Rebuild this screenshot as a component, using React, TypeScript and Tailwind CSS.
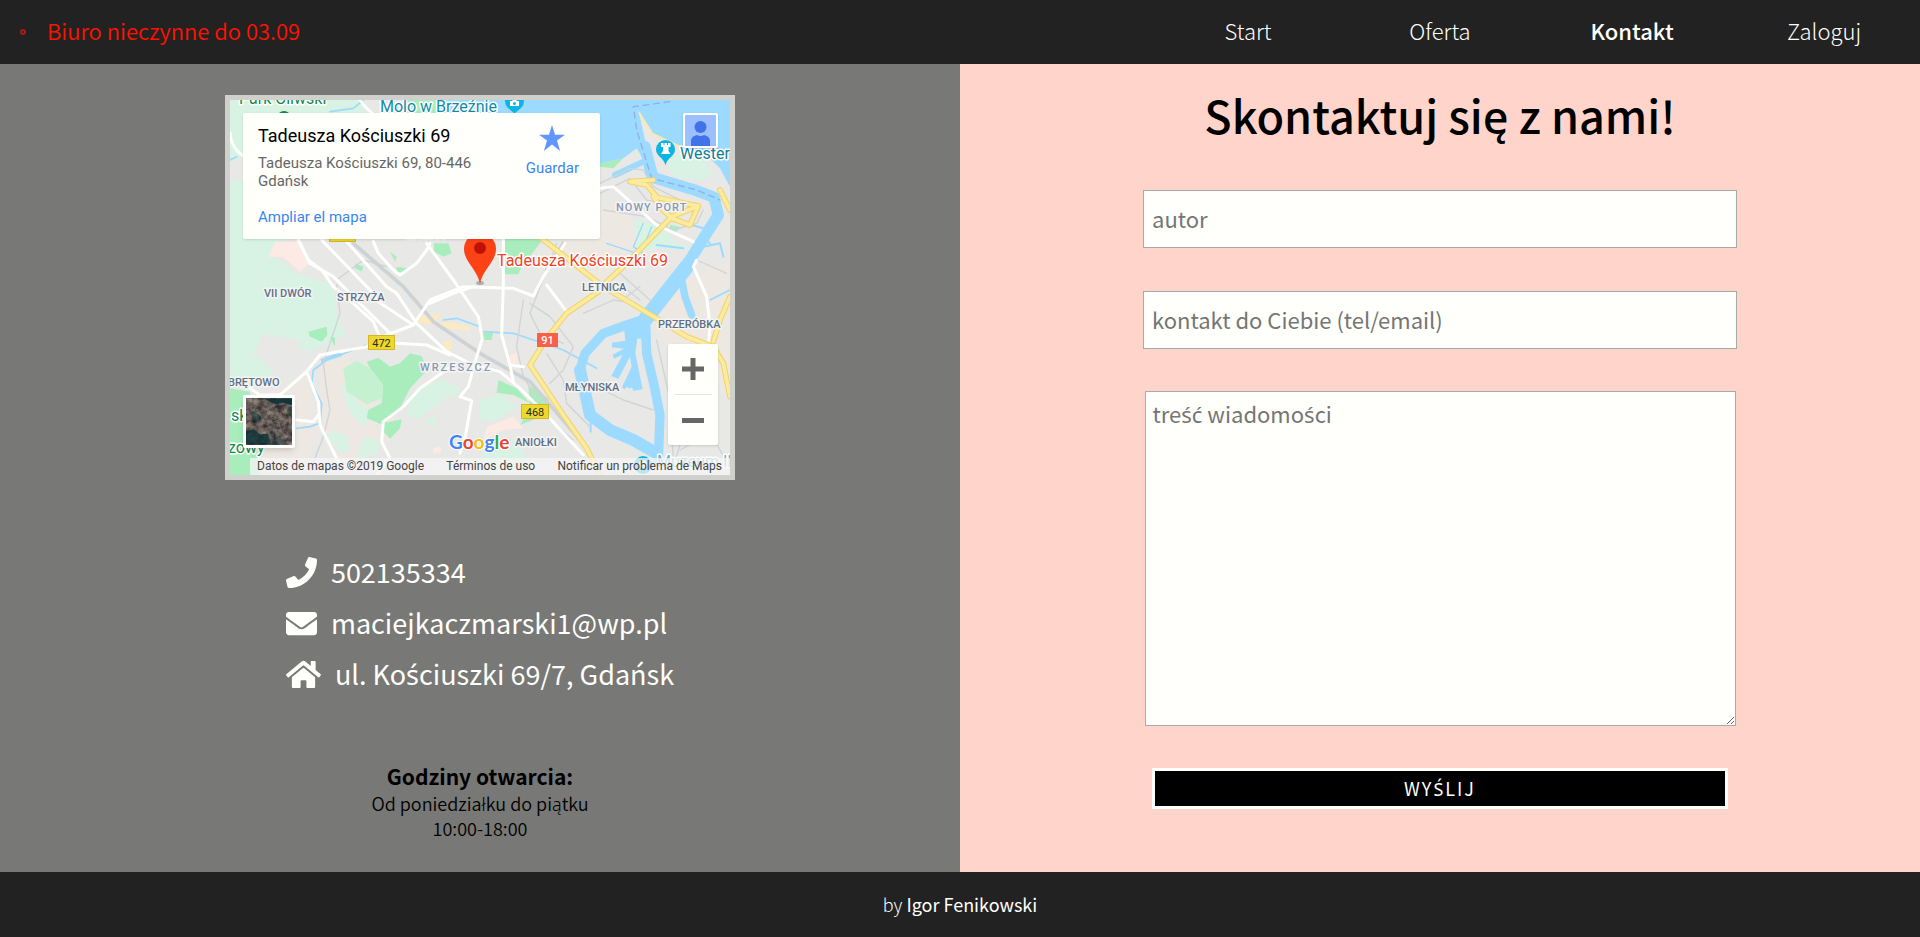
import { FaEnvelope, FaHome, FaPhone } from "react-icons/fa";

const navItems = [
  { label: "Start", active: false },
  { label: "Oferta", active: false },
  { label: "Kontakt", active: true },
  { label: "Zaloguj", active: false },
];

const districts = [
  { name: "VII DWÓR", x: 34, y: 197, color: "#5d6f86", spacing: 0 },
  { name: "STRZYŻA", x: 107, y: 201, color: "#5d6f86", spacing: 0 },
  { name: "ZASPA", x: 176, y: 139, color: "#8798b3", spacing: 1 },
  { name: "NOWY PORT", x: 386, y: 111, color: "#8798b3", spacing: 1 },
  { name: "LETNICA", x: 352, y: 191, color: "#5d6f86", spacing: 0 },
  { name: "PRZERÓBKA", x: 428, y: 228, color: "#5d6f86", spacing: 0 },
  { name: "WRZESZCZ", x: 190, y: 271, color: "#8798b3", spacing: 2 },
  { name: "BRĘTOWO", x: -2, y: 286, color: "#5d6f86", spacing: 0 },
  { name: "MŁYNISKA", x: 335, y: 291, color: "#5d6f86", spacing: 0 },
  { name: "ANIOŁKI", x: 285, y: 346, color: "#5d6f86", spacing: 0 },
];

const whiteRoads = [
  "M205 420L240 490L310 530L480 700",
  "M205 420L235 480L275 510L310 560L370 610L430 665L447 705",
  "M275 420L420 570L445 605L550 675",
  "M350 425L470 560L500 580L560 670L650 755L730 795L810 815L870 865L950 945L1060 1065",
  "M430 425L445 460L490 510L510 525L560 490L590 450L600 430",
  "M590 430L670 540L745 650L757 715L740 770L715 860L690 890L725 902L705 1015L690 1060",
  "M550 675L600 600L700 560L850 565L910 588L940 530L1005 430",
  "M600 610L670 580L730 560",
  "M150 885L230 815L270 765L410 740L470 705L550 675",
  "M500 730L590 735L660 765",
  "M230 815L265 905L270 975L330 1095",
  "M670 795L570 865L520 920L460 965L455 1025L480 1075L440 1125",
  "M820 420L820 555L815 705L840 795L880 800",
  "M950 555L1010 635",
  "M840 795L850 845",
  "M1110 265L1150 260L1280 375L1390 425",
  "M1400 480L1390 500L1430 590L1440 680L1435 740",
  "M0 100Q5 150 45 170",
  "M60 865L90 885L150 885",
  "M390 0Q430 60 500 70",
  "M200 960L250 965L265 945",
];

const thinRoads = [
  "M320 540L400 480L470 500",
  "M320 555L330 640L310 700L280 790L290 870L300 930L280 1010L235 1125",
  "M880 600L860 740L880 830L960 960L1030 1020",
  "M980 430L900 640L930 700L1000 730",
  "M900 610L960 650L1030 740L1000 810L960 850",
  "M950 760L1000 840L1010 910L1080 980",
  "M1100 860L1180 900L1270 930",
  "M1120 330L1250 350L1330 390L1400 370L1420 330",
  "M1110 250L1200 205L1240 210L1270 260L1350 300",
  "M1110 280L1200 235L1250 300L1330 320",
  "M1060 640L1150 600L1220 610",
  "M1180 560L1230 600M1190 590L1230 560M1170 520L1260 600",
  "M1280 720L1320 900L1330 1080",
  "M1330 900L1360 1000L1330 1100",
  "M1350 1050L1440 1000L1500 1100",
  "M1400 480L1490 520",
];

const yellowRoads = [
  "M930 412L1120 560L1280 655L1370 710L1450 740L1480 790L1500 890",
  "M1120 565L1010 640L950 715L900 795L1000 945L1070 1045L1110 1125",
  "M1115 560L1190 490L1325 350L1405 318L1270 290L1290 320L1325 355L1380 375L1405 318",
  "M1280 290L1250 255L1200 245L1270 240",
  "M1470 270L1500 330",
  "M1450 725L1470 660L1500 590",
];

/* Noto Sans CJK has no ready-made ś and ć, so these letters are set in Noto Sans. */
function Polish({ text }: { text: string }) {
  return (
    <span>
      {text.split(/([śćŚĆ]+)/).map((part, i) =>
        i % 2 ? (
          <span key={i} className="font-['Noto_Sans',sans-serif]">
            {part}
          </span>
        ) : (
          part
        ),
      )}
    </span>
  );
}

function MapDrawing() {
  return (
    <svg
      viewBox="0 0 500 375"
      className="block h-full w-full"
      role="img"
      aria-label="Mapa"
      fontFamily="Roboto, sans-serif"
    >
      <rect width="500" height="375" fill="#e8e8e7" />
      <g transform="scale(0.33333)" fill="none" strokeLinejoin="round" strokeLinecap="round">
        <path fill="#ede8e1" d="M270 760L340 740L430 900L520 980L400 1080L330 1090L270 960ZM60 900L230 830L270 1000L220 1100L100 1100ZM930 480L1050 380L1160 300L1240 400L1120 540ZM1240 600L1500 480V900L1310 740Z" />
        <path fill="#d8f3e3" d="M0 0H400V40H60L40 160L0 190ZM0 240H40V417H170L130 470L200 520L310 555L320 640L345 700L300 725L240 755L200 740L220 725L100 700L70 760L120 800L130 840L60 840L0 830Z" />
        <path fill="#d8f3e3" d="M330 850L400 920L440 930L400 980L360 940ZM310 990L350 1010L360 1050L330 1060L290 1010ZM400 1010L450 1020L440 1060L380 1080ZM560 860L640 840L700 870L640 900L560 960L530 940ZM580 960L620 950L610 980ZM1210 360L1280 370L1330 420L1270 450L1220 440ZM1300 160L1420 170L1450 230L1400 240L1330 230ZM1300 420L1390 440L1310 450ZM750 900L810 880L860 920L800 960L750 960ZM750 1020L860 1020L900 1100L760 1125Z" />
        <path fill="#feeae4" d="M135 425L205 425L240 490L210 515L160 470L115 470ZM770 980L850 950L880 985L820 990L760 1020ZM610 1045L630 1040L635 1055L610 1062ZM840 765L860 758L865 790L840 790Z" />
        <path fill="#fcebc0" d="M570 650L630 640L620 670L650 665L720 680V692L650 685L630 670L570 672ZM640 725L665 720L660 760L640 755Z" />
        <path fill="#a9edbd" d="M410 785L445 773L480 800L510 790L540 760L575 768L592 810L540 865L512 920L460 975L410 955L415 930L455 910L460 855L420 805ZM460 970L515 958L510 985L480 1016L460 995ZM235 695L290 680L292 705L275 725L240 710ZM300 710L315 712L315 740ZM825 417H940L875 500L865 523H825ZM612 430L655 430L665 460L640 470L612 455ZM480 455L500 470L495 485ZM375 490L400 500L395 515L375 505ZM500 500L530 505L520 520L500 515ZM805 840L860 865L900 910L850 885L800 878ZM895 855L955 895L960 940L870 975L900 925ZM755 700L790 695L785 720L755 720ZM0 865L60 875L90 1125H0ZM1110 190L1180 175L1150 205L1110 200ZM1320 375L1350 380L1340 395L1320 390ZM520 0H700V40H520Z" />
        <path fill="#c4f1cf" d="M340 805L380 783L420 805L460 855L455 895L410 913L350 875Z" />
        <g stroke="#9cdaff">
          <path fill="#9cdaff" stroke="none" d="M640 0H1500V260L1470 205L1430 165L1350 140L1270 100L1225 30L1245 120L1265 165L1290 240L1250 240L1235 170L1220 145L1180 175L1110 190H690Z" />
          <path strokeWidth="34" d="M1245 140L1268 232L1400 272L1452 292L1465 345L1430 400L1380 480L1310 570L1245 650" />
          <path strokeWidth="44" d="M1370 500L1245 660" />
          <path strokeWidth="18" d="M1155 225L1240 185" />
          <path strokeWidth="28" d="M1235 660L1190 675L1120 700L1065 760L1050 810" />
          <path strokeWidth="36" d="M1050 810L1068 890L1080 945L1140 990L1210 1020L1280 1060" />
          <path strokeWidth="28" d="M1245 650L1250 760L1272 855L1290 945L1285 1080" />
          <path strokeWidth="6" d="M1082 960V995" />
          <path
            fill="#9cdaff"
            stroke="none"
            d="M1182 680L1260 640L1262 720L1222 715L1216 760L1238 868L1210 872L1206 862L1198 866L1192 860L1184 868L1176 862L1205 800L1200 770L1165 836L1144 828L1178 764L1152 776L1148 764L1182 746L1146 742V728L1186 722Z"
          />
          <path strokeWidth="22" d="M1355 540L1365 590L1385 645" />
          <path strokeWidth="6" d="M1385 375L1440 390L1420 440L1470 430L1480 470M1410 410L1440 430M1280 435L1360 445" />
          <path strokeWidth="4" d="M1240 370L1210 440L1240 460M1265 380L1245 430M1130 430L1220 460" />
          <path strokeWidth="5" d="M270 980L275 910L245 850L250 810L290 780L410 735M200 985L240 980L270 970M640 660L680 655L750 680M760 695L850 700L1000 750L1100 805M300 35L370 25L400 0M0 180L20 170M1440 600L1500 570" />
          <path fill="#9cdaff" stroke="none" d="M272 778L330 756L336 768L275 788Z" />
        </g>
        <path stroke="#8fb0ea" strokeWidth="4" strokeDasharray="18 14" d="M1320 5L1210 20L1220 90L1265 235L1400 270L1470 300" />
        {thinRoads.map((d) => (
          <path key={d} d={d} stroke="#d0d4d6" strokeWidth="4" />
        ))}
        <path stroke="#cdd2d5" strokeWidth="11" d="M370 430L520 560L610 665L750 760L900 845L1050 1020M1000 430L950 510" />
        {whiteRoads.map((d) => (
          <path key={d} d={d} stroke="#fffffd" strokeWidth="9" />
        ))}
        {yellowRoads.map((d) => (
          <path key={d} d={d} stroke="#f2d268" strokeWidth="17" />
        ))}
        {yellowRoads.map((d) => (
          <path key={d} d={d} stroke="#fbeb9e" strokeWidth="11" />
        ))}
        <path stroke="#fbe8b0" strokeWidth="6" d="M1228 40L1265 100L1350 140" />
      </g>

      <g fontSize="11" fontWeight="500" stroke="#f4f4f3" strokeWidth="3" paintOrder="stroke" strokeLinejoin="round">
        {districts.map((d) => (
          <text key={d.name} x={d.x} y={d.y} fill={d.color} letterSpacing={d.spacing}>
            {d.name}
          </text>
        ))}
      </g>
      <g stroke="#ffffff" strokeWidth="3" paintOrder="stroke" strokeLinejoin="round">
        <text x="9" y="4" fontSize="16" fill="#13894a">Park Oliwski</text>
        <text x="1" y="321" fontSize="16" fill="#13894a">skie</text>
        <text x="-2" y="353" fontSize="16" fill="#13894a">zowy</text>
        <text x="150" y="12" fontSize="16" fill="#0f8ba8">Molo w Brzeźnie</text>
        <text x="450" y="59" fontSize="16" fill="#0f8096">Wester</text>
        <text x="427" y="367" fontSize="16" fill="#62b6cf">Muzeum II</text>
        <text x="267" y="166" fontSize="16" fill="#f1431f">Tadeusza Kościuszki 69</text>
      </g>

      <g fill="#0eb4e4">
        <path d="M275 0H294A10 10 0 0 1 291 8L284.500 13.500L278 8A10 10 0 0 1 275 0Z" />
        <path d="M280 1H282L283 0H286L287 1H289V6H280Z" fill="#fff" />
        <circle cx="284.500" cy="3.500" r="1.500" />
        <path d="M435.500 65C433 57 426 56 426 49.500A9.500 9.500 0 0 1 445 49.500C445 56 438 57 435.500 65Z" />
        <path d="M431 43H433.500V45H434.500V43H437V45H438V43H440.500V47H438.500V51L440.500 54H431L433 51V47H431Z" fill="#fff" />
        <circle cx="413" cy="365" r="9" />
        <circle cx="413" cy="364" r="4" fill="#dff5fc" />
      </g>
      <circle cx="54" cy="18" r="7" fill="#13894a" />

      <g fontSize="11" textAnchor="middle">
        <rect x="99.500" y="124.500" width="26" height="17" fill="#ecd92c" stroke="#d5b52a" />
        <rect x="138.500" y="235.500" width="26" height="14" fill="#ecd92c" stroke="#d5b52a" />
        <text x="151.500" y="246.500" fill="#2c2c22">472</text>
        <rect x="291.500" y="304.500" width="27" height="14" fill="#ecd92c" stroke="#d5b52a" />
        <text x="305" y="315.500" fill="#2c2c22">468</text>
        <rect x="307" y="233" width="21" height="14" fill="#f9604a" />
        <text x="317.500" y="244" fill="#fff" fontWeight="500">91</text>
      </g>

      <ellipse cx="250" cy="183" rx="4" ry="2" fill="#777" opacity="0.5" />
      <path d="M250 184C248 170 234 162 234 149A16 16 0 0 1 266 149C266 162 252 170 250 184Z" fill="#fd4216" />
      <circle cx="250" cy="148" r="6" fill="#bd1108" />

      <text x="219" y="349" fontFamily="Lato, sans-serif" fontWeight="700" fontSize="19" stroke="#fff" strokeWidth="2" paintOrder="stroke">
        <tspan fill="#4285f4">G</tspan>
        <tspan fill="#ea4335">o</tspan>
        <tspan fill="#fbbc05">o</tspan>
        <tspan fill="#4285f4">g</tspan>
        <tspan fill="#34a853">l</tspan>
        <tspan fill="#ea4335">e</tspan>
      </text>
    </svg>
  );
}

function SatelliteThumb() {
  return (
    <svg viewBox="0 0 46 46" className="block h-full w-full" aria-hidden="true">
      <defs>
        <filter id="terrain" x="0" y="0" width="100%" height="100%" colorInterpolationFilters="sRGB">
          <feTurbulence type="fractalNoise" baseFrequency="0.16" numOctaves="4" seed="8" />
          <feColorMatrix values="0.7 0 0 0 0.03  0.6 0 0 0 0.05  0.52 0 0 0 0.07  0 0 0 0 1" />
        </filter>
      </defs>
      <rect width="46" height="46" filter="url(#terrain)" />
      <path d="M18 0H46V7L38 4L30 6L24 3Z" fill="#0d3338" opacity="0.9" />
      <path d="M0 33L8 31L14 36L22 35L25 46H0Z" fill="#0b3236" opacity="0.8" />
      <path d="M4 14L10 12L16 20L10 24ZM42 8H46V20L41 14ZM28 40L34 36L38 46H30Z" fill="#0f393c" opacity="0.5" />
      <path d="M4 10L14 16L20 26L32 22L36 34L44 40" stroke="#8b817b" fill="none" opacity="0.5" />
    </svg>
  );
}

function MapWidget() {
  return (
    <section
      aria-label="Mapa dojazdu"
      className="relative h-[385px] w-[510px] overflow-hidden border-5 border-[#d0d0cd] font-[Roboto,sans-serif]"
    >
      <MapDrawing />
      <div className="absolute left-[13px] top-[13px] flex h-[126px] w-[357px] justify-between rounded-xs bg-[#fffffc] py-3 pl-[15px] pr-[21px] shadow">
        <div className="flex flex-col">
          <h2 className="text-[18px] leading-[22px] font-normal text-black">Tadeusza Kościuszki 69</h2>
          <p className="mt-[7px] w-[220px] text-[15px] leading-[18px] text-[#666]">
            Tadeusza Kościuszki 69, 80-446 Gdańsk
          </p>
          <a href="#mapa" className="mt-[18px] text-[15px] leading-[18px] text-[#3a86f0]">
            Ampliar el mapa
          </a>
        </div>
        <button type="button" className="flex flex-col items-center self-start text-[15px] leading-[18px] text-[#3a86f0]">
          <svg viewBox="0 0 24 24" className="mb-2 h-[26px] w-[26px]" aria-hidden="true">
            <path d="M12 0L14.800 9H24L16.600 14.200L19.500 24L12 18L4.500 24L7.400 14.200L0 9H9.200Z" fill="#6196ff" />
          </svg>
          Guardar
        </button>
      </div>
      <button
        type="button"
        aria-label="Konto"
        className="absolute right-3 top-[13px] h-[35px] w-[35px] rounded-xs border-2 border-white bg-[#9bbfff] shadow"
      >
        <svg viewBox="0 0 31 31" className="block h-full w-full" aria-hidden="true">
          <circle cx="15.500" cy="12" r="6" fill="#4073e8" />
          <path d="M6 31V25Q7 21 12 20Q15.500 22 19 20Q24 21 25 25V31Z" fill="#4073e8" />
        </svg>
      </button>
      <button
        type="button"
        aria-label="Satelita"
        className="absolute bottom-[27px] left-[13px] h-[53px] w-[52px] overflow-hidden rounded-xs border-3 border-white shadow-md"
      >
        <SatelliteThumb />
      </button>
      <div className="absolute bottom-[30px] right-3 flex w-[50px] flex-col items-center rounded-xs bg-[#fffffc] shadow">
        <button type="button" aria-label="Przybliż" className="flex h-[50px] w-full items-center justify-center">
          <svg viewBox="0 0 22 22" className="h-[22px] w-[22px]" aria-hidden="true">
            <path d="M9 0H13V9H22V13H13V22H9V13H0V9H9Z" fill="#666" stroke="#666" />
          </svg>
        </button>
        <span className="h-px w-[37px] bg-[#e4e4e2]" />
        <button type="button" aria-label="Oddal" className="flex h-[50px] w-full items-center justify-center">
          <svg viewBox="0 0 22 22" className="h-[22px] w-[22px]" aria-hidden="true">
            <path d="M0 9H22V14H0Z" fill="#666" />
          </svg>
        </button>
      </div>
      <div className="absolute bottom-0 right-0 flex w-[480px] justify-between bg-[#f5f5f5]/75 pl-[7px] pr-2 text-[12px] leading-[17px] text-[#444]">
        <span>Datos de mapas ©2019 Google</span>
        <a href="#terminos">Términos de uso</a>
        <a href="#notificar">Notificar un problema de Maps</a>
      </div>
    </section>
  );
}

export default function App() {
  return (
    <div className="flex min-h-screen flex-col bg-[#222] font-['Noto_Sans_CJK_SC','Noto_Sans',sans-serif] text-[#fffffc]">
      <header className="flex h-16 items-center pb-1">
        <ul className="flex w-3/5 pl-5 text-[22px] leading-8 font-[350] text-[#ff1200]">
          <li className="flex items-center gap-[21px]">
            <span className="mt-1 size-[6px] rounded-full border-2 border-[#a81c10]" />
            Biuro nieczynne do 03.09
          </li>
        </ul>
        <nav className="grid w-2/5 grid-cols-4 text-center text-[22px] leading-8">
          {navItems.map((item) => (
            <a key={item.label} href={`#${item.label.toLowerCase()}`} className={item.active ? "font-medium" : "font-light"}>
              {item.label}
            </a>
          ))}
        </nav>
      </header>

      <main className="grid flex-1 grid-cols-2">
        <div className="flex flex-col items-center bg-[#787876] pt-[31px]">
          <MapWidget />
          <address className="mt-[72px] flex flex-col gap-[11px] text-[27px] leading-[40px] not-italic">
            <a href="tel:502135334" className="flex items-center gap-[14px]">
              <FaPhone className="h-[31px] w-[31px]" />
              502135334
            </a>
            <a href="mailto:maciejkaczmarski1@wp.pl" className="flex items-center gap-[14px]">
              <FaEnvelope className="h-[31px] w-[31px]" />
              maciejkaczmarski1@wp.pl
            </a>
            <div className="flex items-center gap-[14px]">
              <FaHome className="h-[31px] w-[35px]" />
              <Polish text="ul. Kościuszki 69/7, Gdańsk" />
            </div>
          </address>
          <section className="mt-[66px] text-center text-[18px] leading-[25px] font-[350] text-black">
            <h2 className="text-[21px] leading-[30px] font-bold">Godziny otwarcia:</h2>
            <p>Od poniedziałku do piątku</p>
            <p>10:00-18:00</p>
          </section>
        </div>

        <form className="flex flex-col items-center bg-[#ffd5cb] text-[22px]" onSubmit={(e) => e.preventDefault()}>
          <h1 className="mt-[17px] text-[45px] leading-[68px] font-medium text-black">Skontaktuj się z nami!</h1>
          <input
            type="text"
            aria-label="autor"
            placeholder="autor"
            className="mt-[41px] h-[58px] w-[calc(60%+18px)] border border-[#a9a9a6] bg-[#fffffc] px-2 pb-0.5 text-black placeholder:text-[#757575]"
          />
          <input
            type="text"
            aria-label="kontakt do Ciebie"
            placeholder="kontakt do Ciebie (tel/email)"
            className="mt-[43px] h-[58px] w-[calc(60%+18px)] border border-[#a9a9a6] bg-[#fffffc] px-2 pb-0.5 text-black placeholder:text-[#757575]"
          />
          <div className="relative mt-[42px] w-[calc(60%+15px)]">
            <textarea
              id="message"
              placeholder=" "
              className="peer block h-[335px] w-full resize border border-[#a9a9a6] bg-[#fffffc] px-[7px] py-1 leading-[34px] text-black"
            />
            <label
              htmlFor="message"
              className="pointer-events-none invisible absolute left-2 top-[5px] leading-[34px] text-[#757575] peer-placeholder-shown:visible"
            >
              <Polish text="treść wiadomości" />
            </label>
          </div>
          <button
            type="submit"
            className="mt-[42px] h-[41px] w-3/5 border-3 border-[#fffffc] bg-black text-[18px] leading-[26px] tracking-[2px] text-[#fffffc]"
          >
            <Polish text="WYŚLIJ" />
          </button>
        </form>
      </main>

      <footer className="flex h-[65px] items-center justify-center pb-0.5 text-[18px] leading-[26px] font-light">
        <p>
          by <span className="font-normal">Igor Fenikowski</span>
        </p>
      </footer>
    </div>
  );
}
